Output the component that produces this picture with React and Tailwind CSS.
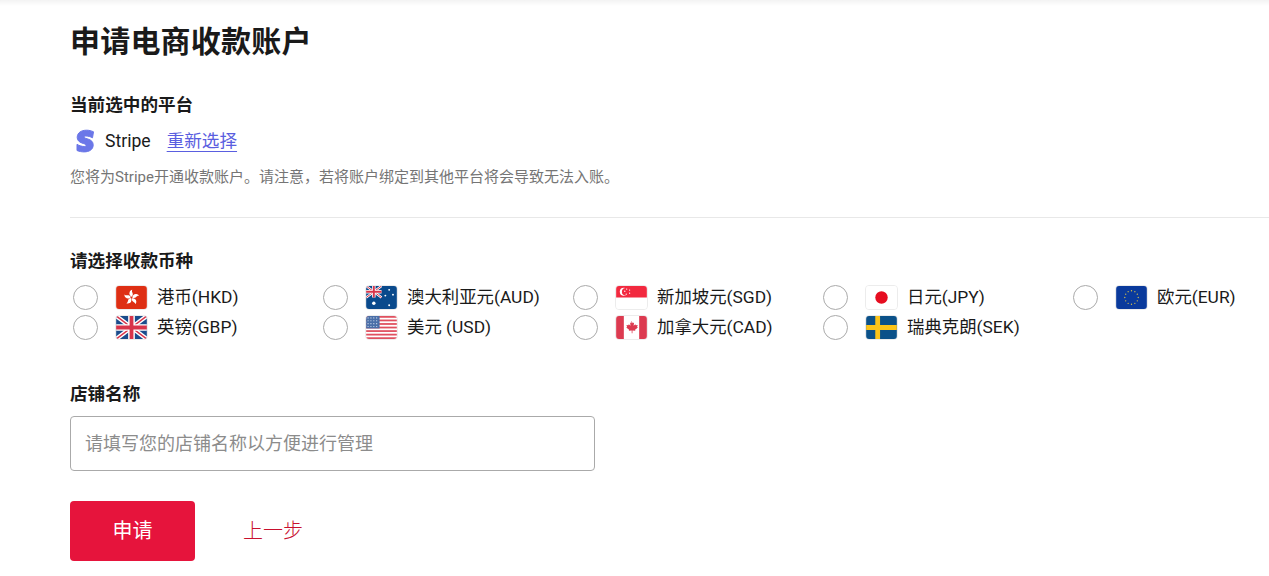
function Hk() {
  return (
    <svg viewBox="0 0 32 24" className="w-full h-full">
      <rect width="32" height="24" fill="#de2f14" />
      <g fill="#fff">
        {[0, 72, 144, 216, 288].map((a) => (
          <path key={a} transform={`rotate(${a} 16 12)`} d="M16.400 11.200c-2.100-.8-3.200-2.900-2.300-5 .5-1.100 1.500-1.900 2.700-2.200-.7 1.300-.2 2.300.3 3.400.5 1.400.3 2.800-.7 3.800z" />
        ))}
      </g>
    </svg>
  );
}
function Au() {
  return (
    <svg viewBox="0 0 32 24" className="w-full h-full">
      <rect width="32" height="24" fill="#0a4a8c" />
      <path d="M0 0l16 12M16 0L0 12" stroke="#fff" strokeWidth="2.400" />
      <path d="M0 0l16 12M16 0L0 12" stroke="#d8344a" strokeWidth="1" />
      <path d="M8 0v12M0 6h16" stroke="#fff" strokeWidth="3.600" />
      <path d="M8 0v12M0 6h16" stroke="#d8344a" strokeWidth="2" />
      <g fill="#fff">
        <circle cx="8" cy="18" r="1.800" />
        <circle cx="24" cy="4" r="1" />
        <circle cx="24" cy="20" r="1" />
        <circle cx="20" cy="10" r="1" />
        <circle cx="28" cy="9" r="1" />
      </g>
    </svg>
  );
}
function Sg() {
  return (
    <svg viewBox="0 0 32 24" className="w-full h-full">
      <rect width="32" height="24" fill="#fff" />
      <rect width="32" height="12" fill="#f2293f" />
      <circle cx="8" cy="6" r="4.200" fill="#fff" />
      <circle cx="10" cy="6" r="4" fill="#f2293f" />
      <g fill="#fff">
        <circle cx="11" cy="3.200" r=".7" />
        <circle cx="14" cy="4.300" r=".7" />
        <circle cx="9" cy="5.500" r=".7" />
        <circle cx="14" cy="7.500" r=".7" />
        <circle cx="10.500" cy="8.500" r=".7" />
      </g>
    </svg>
  );
}
function Jp() {
  return (
    <svg viewBox="0 0 32 24" className="w-full h-full">
      <rect width="32" height="24" fill="#fff" />
      <circle cx="16" cy="12" r="6.500" fill="#e60d20" />
    </svg>
  );
}
function Eu() {
  const stars = Array.from({ length: 12 }, (_, i) => i * 30);
  return (
    <svg viewBox="0 0 32 24" className="w-full h-full">
      <rect width="32" height="24" fill="#0a3a9c" />
      {stars.map((a) => (
        <circle key={a} cx={16 + 7 * Math.cos((a * Math.PI) / 180)} cy={12 + 7 * Math.sin((a * Math.PI) / 180)} r=".7" fill="#d8c24a" />
      ))}
    </svg>
  );
}
function Gb() {
  return (
    <svg viewBox="0 0 32 24" className="w-full h-full">
      <rect width="32" height="24" fill="#1a4c8c" />
      <path d="M0 0l32 24M32 0L0 24" stroke="#fff" strokeWidth="4.500" />
      <path d="M0 0l32 24M32 0L0 24" stroke="#d8344a" strokeWidth="1.600" />
      <path d="M16 0v24M0 12h32" stroke="#fff" strokeWidth="7" />
      <path d="M16 0v24M0 12h32" stroke="#d8344a" strokeWidth="4" />
    </svg>
  );
}
function Us() {
  const rows = [0, 1, 2, 3, 4, 5, 6];
  return (
    <svg viewBox="0 0 32 24" className="w-full h-full">
      <rect width="32" height="24" fill="#fff" />
      {rows.map((r) => (
        <rect key={r} y={r * 3.700} width="32" height="1.850" fill="#e0505f" />
      ))}
      <rect width="14" height="13" fill="#4a6fa8" />
      {[2, 5, 8, 11].map((y) => [2, 5, 8, 11].map((x) => <circle key={`${x}-${y}`} cx={x} cy={y} r=".6" fill="#dfe8f4" />))}
    </svg>
  );
}
function Ca() {
  return (
    <svg viewBox="0 0 32 24" className="w-full h-full">
      <rect width="32" height="24" fill="#fff" />
      <rect width="8" height="24" fill="#dc3a50" />
      <rect x="24" width="8" height="24" fill="#dc3a50" />
      <path d="M16 5l1.300 2.500 1.400-.7-.5 3.300 1.800-1.600.5 1.200 2-.3-.7 2.100.9.500-3 2.400.3 1.100-3-.4v3h-.8v-3l-3 .4.300-1.100-3-2.400.9-.5-.7-2.100 2 .3.500-1.200 1.800 1.600-.5-3.300 1.400.7z" fill="#dc3a50" />
    </svg>
  );
}
function Se() {
  return (
    <svg viewBox="0 0 32 24" className="w-full h-full">
      <rect width="32" height="24" fill="#0b5189" />
      <path d="M0 12h32M12 0v24" stroke="#fcc419" strokeWidth="5" />
    </svg>
  );
}

const currencies = [
  { label: "港币(HKD)", Flag: Hk },
  { label: "澳大利亚元(AUD)", Flag: Au },
  { label: "新加坡元(SGD)", Flag: Sg },
  { label: "日元(JPY)", Flag: Jp },
  { label: "欧元(EUR)", Flag: Eu },
  { label: "英镑(GBP)", Flag: Gb },
  { label: "美元 (USD)", Flag: Us },
  { label: "加拿大元(CAD)", Flag: Ca },
  { label: "瑞典克朗(SEK)", Flag: Se },
];

function CurrencyOption({ label, Flag }) {
  return (
    <label className="flex items-center h-[30px]">
      <span className="w-[25px] h-[25px] ml-[3px] rounded-full border border-[#aaaaaa] bg-white shrink-0" />
      <span className="w-[33px] h-[25px] ml-[17px] rounded-[4px] overflow-hidden border border-[#ececec] shrink-0">
        <Flag />
      </span>
      <span className="ml-[9px] text-[17.4px] text-[#1a1a1a] whitespace-nowrap">{label}</span>
    </label>
  );
}

export default function App() {
  return (
    <div className="h-[576px] w-[1269px] overflow-hidden bg-white font-['Roboto','Noto_Sans_CJK_SC',sans-serif] text-[#1a1a1a]">
      <div className="h-[6px] bg-gradient-to-b from-[#f3f3f3] to-white" />
      <div className="pl-[70px]">
        <h1 className="mt-[14px] pt-[1px] text-[30px] leading-[42px] font-bold tracking-[0.2px]">申请电商收款账户</h1>

        <h2 className="mt-[30px] text-[17.6px] leading-[24px] font-bold">当前选中的平台</h2>
        <div className="mt-[12px] flex items-center h-[24px]">
          <svg viewBox="0 0 24 24" className="w-[24px] h-[24px] ml-[3px]">
            <path d="M20.500 2.800C18.200 1.700 15.900 1.200 13.500 1.200 8.500 1.200 4.200 3.600 4.200 8.400c0 6.400 8.900 5.600 8.900 7.900 0 .9-.9 1.200-2 1.200-2.200 0-5-.9-7.100-2.200v6.200c2.300 1 4.800 1.400 7.100 1.400 5 0 9.100-2.200 9.100-7 0-6.600-9-5.700-9-7.800 0-.8.8-1.100 1.900-1.100 2 0 4.400.7 6.400 1.800z" fill="#6b77e8" stroke="#6b77e8" strokeWidth="1" />
          </svg>
          <span className="ml-[8px] text-[17.6px] text-[#1a1a1a]">Stripe</span>
          <a className="ml-[16px] text-[17.6px] text-[#5a5ee0] underline underline-offset-[4px]">重新选择</a>
        </div>
        <p className="mt-[14px] text-[15px] leading-[20px] text-[#757575]">{"您将为Stripe开通收款账户。请注意\uFF0C若将账户绑定到其他平台将会导致无法入账。"}</p>

        <div className="mt-[30px] h-px bg-[#e8e8e8]" />

        <h2 className="mt-[31px] text-[17.6px] leading-[24px] font-bold">请选择收款币种</h2>
        <div className="mt-[9px] grid grid-cols-[repeat(5,250px)]">
          {currencies.map((c) => (
            <CurrencyOption key={c.label} label={c.label} Flag={c.Flag} />
          ))}
        </div>

        <h2 className="mt-[40px] text-[17.6px] leading-[24px] font-bold">店铺名称</h2>
        <input
          placeholder="请填写您的店铺名称以方便进行管理"
          className="mt-[10px] block w-[525px] h-[55px] rounded-[4px] border border-[#aaaaaa] px-[14px] text-[18px] placeholder-[#8c8c8c] outline-none"
        />

        <div className="mt-[30px] flex items-center">
          <button className="w-[125px] h-[60px] rounded-[4px] bg-[#e6143c] text-white text-[20px]">申请</button>
          <a className="ml-[48px] text-[20px] font-light text-[#c8102e]">上一步</a>
        </div>
      </div>
    </div>
  );
}
